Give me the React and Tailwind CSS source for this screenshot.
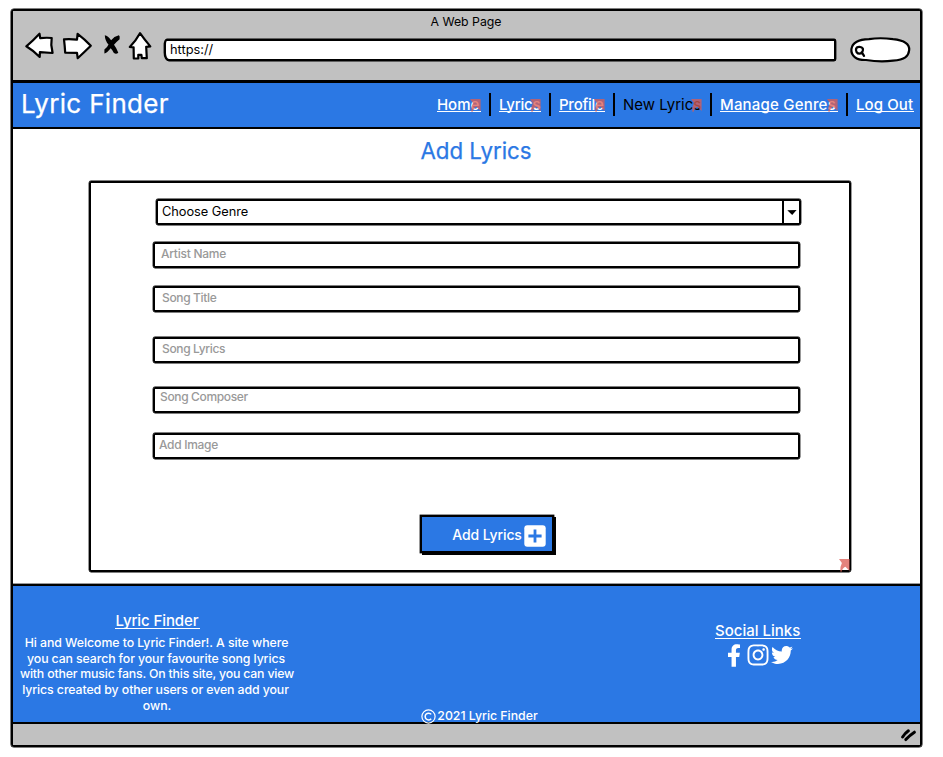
import { FaFacebookF, FaInstagram, FaTwitter } from "react-icons/fa";

function LinkMark({ className }) {
  return (
    <svg className={`absolute h-[13px] w-[11px] ${className}`} viewBox="0 0 11 13">
      <path d="M0 0H10.6V12L6.4 7.8Q3.4 9 2.4 13L1.3 12.4Q1 7.5 2.9 4Z" fill="#dc5c54" fillOpacity=".76" />
    </svg>
  );
}

function NavLink({ children, className, marked = true, active = false }) {
  return (
    <div className={`relative h-[23px] pt-px whitespace-nowrap text-[15px] leading-5 ${className}`}>
      {active ? (
        <a className="text-black">{children}</a>
      ) : (
        <a className="block h-[17px] border-b border-white font-medium text-white">{children}</a>
      )}
      {marked && <LinkMark className="top-[5px] right-0" />}
    </div>
  );
}

const Divider = ({ className }) => <div className={`-mt-px h-[23px] w-[2px] shrink-0 bg-black ${className}`} />;

function Field({ className, label }) {
  return (
    <div className={`ml-[62px] h-[26px] w-[647px] rounded-[2px] border-2 border-black text-xs font-medium text-[#999] shadow-[0_0_0_0.4px_#000] ${className}`}>
      {label}
    </div>
  );
}

function BrowserBar() {
  return (
    <div className="h-[72px] border-b-[3px] border-black bg-[#c1c1c1]">
      <div className="h-[20px] pt-[1px] pr-[1px] text-center text-[12.3px] leading-5 text-black">A Web Page</div>
      <div className="flex">
        <svg className="h-9 w-[150px] shrink-0" viewBox="13 30 150 36" fill="#fff" stroke="#000" strokeWidth="2.2" strokeLinejoin="round">
          <path d="M26.3 45.3Q33 39.7 39.5 32.7L40.2 37.2Q46 36.4 51.7 37L51.3 44L52.6 52L39.9 51.2L39.7 56Q34 50 26.3 45.3Z" />
          <path d="M64 38.3Q70 37.7 77 38.6L77.6 32.8Q85 38.4 90.8 44.8Q84 51.5 77.7 57.2L77 51.8L65.2 51.7Q64.8 45 64 38.3Z" />
          <path d="M104.8 34.2Q108 34.8 111.1 39.2Q114 35.5 118.9 34.3Q120.1 35 119.6 38.2Q116.6 40.6 114 43.8Q116.7 47.3 118.3 51.7Q116 54 113.7 51.7Q112.4 49 110.7 47.3Q107 52 104.4 52.6L104.4 48.5Q107.6 46.2 108.5 43.6Q105 39.8 104.8 34.2Z" fill="#000" stroke="none" />
          <path d="M140 32.2Q144.8 39 150.3 45.4L146.2 45.8L146.8 57.2L141.8 57.2L141.4 53.8L138.3 53.8L138.3 57.4L133.8 57.5L133.6 46.3L129.8 46Q136 39.5 140 32.2Z" />
        </svg>
        <div className="mt-[8px] ml-[1px] h-[22px] w-[672px] shrink-0 rounded-[3px_2px_2px_5px/6px_3px_2px_8px] border-2 border-black bg-white pl-[4px] text-[12.8px] leading-[17px] text-black shadow-[0_0_0_0.4px_#000]">
          https://
        </div>
        <svg className="ml-[13px] h-9 w-[64px] shrink-0" viewBox="849 30 64 36" fill="#fff" stroke="#000">
          <path d="M869 38.2Q880 36.3 893 38.2C904 39.3 909.6 42.5 909.2 49C908.5 55.5 905 58.6 893 59.7Q880 61.5 866 59C856 59.3 850.8 54.5 851.4 48.2C852.3 42 858 38.5 869 38.2Z" strokeWidth="2.2" />
          <path d="M856.2 47.5C857.2 45 861.7 45.4 862.8 47.6C863.5 49.9 862 52.5 859.6 52.7C857 52.7 855.3 50 856.2 47.5ZM861.7 51.2L864 54.8" strokeWidth="2.3" strokeLinecap="round" />
        </svg>
      </div>
    </div>
  );
}

function NavBar() {
  return (
    <nav className="flex h-[46px] border-b-2 border-black bg-[#2b78e4] shadow-[0_0.4px_0_#000]">
      <div className="w-[424px] shrink-0 pl-[8px] text-[26px] leading-[42px] tracking-[0.32px] text-white [-webkit-text-stroke:0.25px_#fff]">Lyric Finder</div>
      <div className="mt-[11px] flex">
        <NavLink className="w-[44px] tracking-[-0.05px]">Home</NavLink>
        <Divider className="ml-2" />
        <NavLink className="ml-2 w-[42px] tracking-[-0.2px]">Lyrics</NavLink>
        <Divider className="ml-2" />
        <NavLink className="ml-2 w-[46px] tracking-[-0.25px]">Profile</NavLink>
        <Divider className="ml-2" />
        <NavLink className="ml-2 w-[79px]" active>New Lyrics</NavLink>
        <Divider className="ml-2" />
        <NavLink className="ml-2 w-[118px] tracking-[0.2px]">Manage Genres</NavLink>
        <Divider className="ml-2" />
        <NavLink className="ml-2 w-[58px] tracking-[0.1px]" marked={false}>Log Out</NavLink>
      </div>
    </nav>
  );
}

function LyricsForm() {
  return (
    <main className="h-[455px] bg-white pt-[9px]">
      <h1 className="h-[43px] pl-[19px] text-center text-[22.3px] leading-[26px] text-[#2b78e4] [-webkit-text-stroke:0.25px_#2b78e4]">Add Lyrics</h1>
      <form className="relative ml-[76px] h-[391px] w-[762px] rounded-[2px] border-2 border-black pt-[16px] shadow-[0_0_0_0.4px_#000]">
        <div className="ml-[65px] flex h-[26px] w-[645px] rounded-[2px] border-2 border-black shadow-[0_0_0_0.4px_#000]">
          <div className="w-[624px] pl-[4px] text-[12.8px] leading-[21px] tracking-[-0.05px] text-black">Choose Genre</div>
          <div className="flex h-full flex-1 items-center justify-center border-l-2 border-black">
            <svg className="h-[5px] w-[10px]" viewBox="0 0 10 5"><path d="M.3 .2L9.6 0L5.2 5Z" /></svg>
          </div>
        </div>
        <Field className="mt-[17px] pl-[6px] leading-[19px] tracking-[-0.25px]" label="Artist Name" />
        <Field className="mt-[18px] pl-[7px] leading-[19px] tracking-[-0.35px]" label="Song Title" />
        <Field className="mt-[25px] pl-[7px] leading-[19px] tracking-[-0.35px]" label="Song Lyrics" />
        <Field className="mt-[24px] pl-[5px] leading-[15px] tracking-[-0.35px]" label="Song Composer" />
        <Field className="mt-[20px] pl-[4px] leading-[19px] tracking-[-0.3px]" label="Add Image" />
        <button type="button" className="mt-[56px] ml-[329px] flex h-[38px] w-[134px] items-center border-2 border-black bg-[#2b78e4] pl-[28px] text-[14px] font-medium tracking-[-0.1px] text-white shadow-[2px_2px_0_#000,0_0_0_0.4px_#000]">
          <span className="w-[74px] shrink-0 whitespace-nowrap">Add Lyrics</span>
          <svg className="mt-[3px] h-[22px] w-[22px] shrink-0" viewBox="0 0 22 22">
            <rect x=".3" y=".3" width="21.4" height="21.4" rx="3" fill="#fff" />
            <path d="M11 4.4V17.6M4.4 11H17.6" stroke="#2b78e4" strokeWidth="2.8" />
          </svg>
        </button>
        <LinkMark className="right-[-1px] bottom-[-2px]" />
      </form>
    </main>
  );
}

function Footer() {
  return (
    <footer className="flex h-[140px] border-y-2 border-black bg-[#2b78e4] text-white shadow-[0_0_0_0.4px_#000]">
      <div className="w-[288px] shrink-0 pt-[25px] text-center">
        <h2 className="mx-auto h-[18px] w-[85px] border-b border-white text-[15px] leading-5 font-medium tracking-[-0.1px] whitespace-nowrap">Lyric Finder</h2>
        <p className="mt-[6px] text-[12.3px] leading-[15.7px] font-medium whitespace-nowrap">
          <span className="block pr-[1px] tracking-[-0.05px]">Hi and Welcome to Lyric Finder!. A site where</span>
          <span className="block pr-[2px] tracking-[-0.1px]">you can search for your favourite song lyrics</span>
          <span className="block tracking-[-0.18px]">with other music fans. On this site, you can view</span>
          <span className="block pr-[3px] tracking-[-0.08px]">lyrics created by other users or even add your</span>
          <span className="block">own.</span>
        </p>
      </div>
      <div className="flex w-[357px] shrink-0 items-end justify-center">
        <div className="-mb-[2px] flex items-center">
          <svg className="mt-[2px] h-[15px] w-[15px]" viewBox="0 0 15 15" fill="none" stroke="#fff">
            <circle cx="7.5" cy="7.5" r="6.6" strokeWidth="1.2" />
            <path d="M10.2 5.4A3.4 3.4 0 1 0 10.2 9.7" strokeWidth="1.5" />
          </svg>
          <span className="ml-[1px] text-[12.3px] leading-4 font-medium">2021 Lyric Finder</span>
        </div>
      </div>
      <div className="flex-1 pt-[35px]">
        <h2 className="ml-[57px] h-[18px] w-[86px] border-b border-white text-[15px] leading-5 font-medium whitespace-nowrap">Social Links</h2>
        <div className="mt-[4px] ml-[69px] flex items-center">
          <FaFacebookF className="h-[23px] w-[14px]" />
          <FaInstagram className="ml-[5px] h-[24px] w-[24px]" />
          <FaTwitter className="ml-[1px] h-[22px] w-[22px]" />
        </div>
      </div>
    </footer>
  );
}

export default function App() {
  return (
    <div className="h-[757px] w-[943px] bg-white pt-[9px] pl-[11px] font-['Inter','Liberation_Sans',sans-serif]">
      <div className="h-[738px] w-[911px] rounded-[3px] border-2 border-black shadow-[0_0_0_0.5px_#000]">
        <BrowserBar />
        <NavBar />
        <LyricsForm />
        <Footer />
        <div className="flex h-[21px] items-center justify-end bg-[#c1c1c1] pr-[3px]">
          <svg className="h-[14px] w-[17px]" viewBox="0 0 17 14" stroke="#000" strokeWidth="3" strokeLinecap="round">
            <path d="M2.6 9Q5 5.2 8.4 2.8M5.8 11.6Q10 7 14.4 4.2" fill="none" />
          </svg>
        </div>
      </div>
    </div>
  );
}
